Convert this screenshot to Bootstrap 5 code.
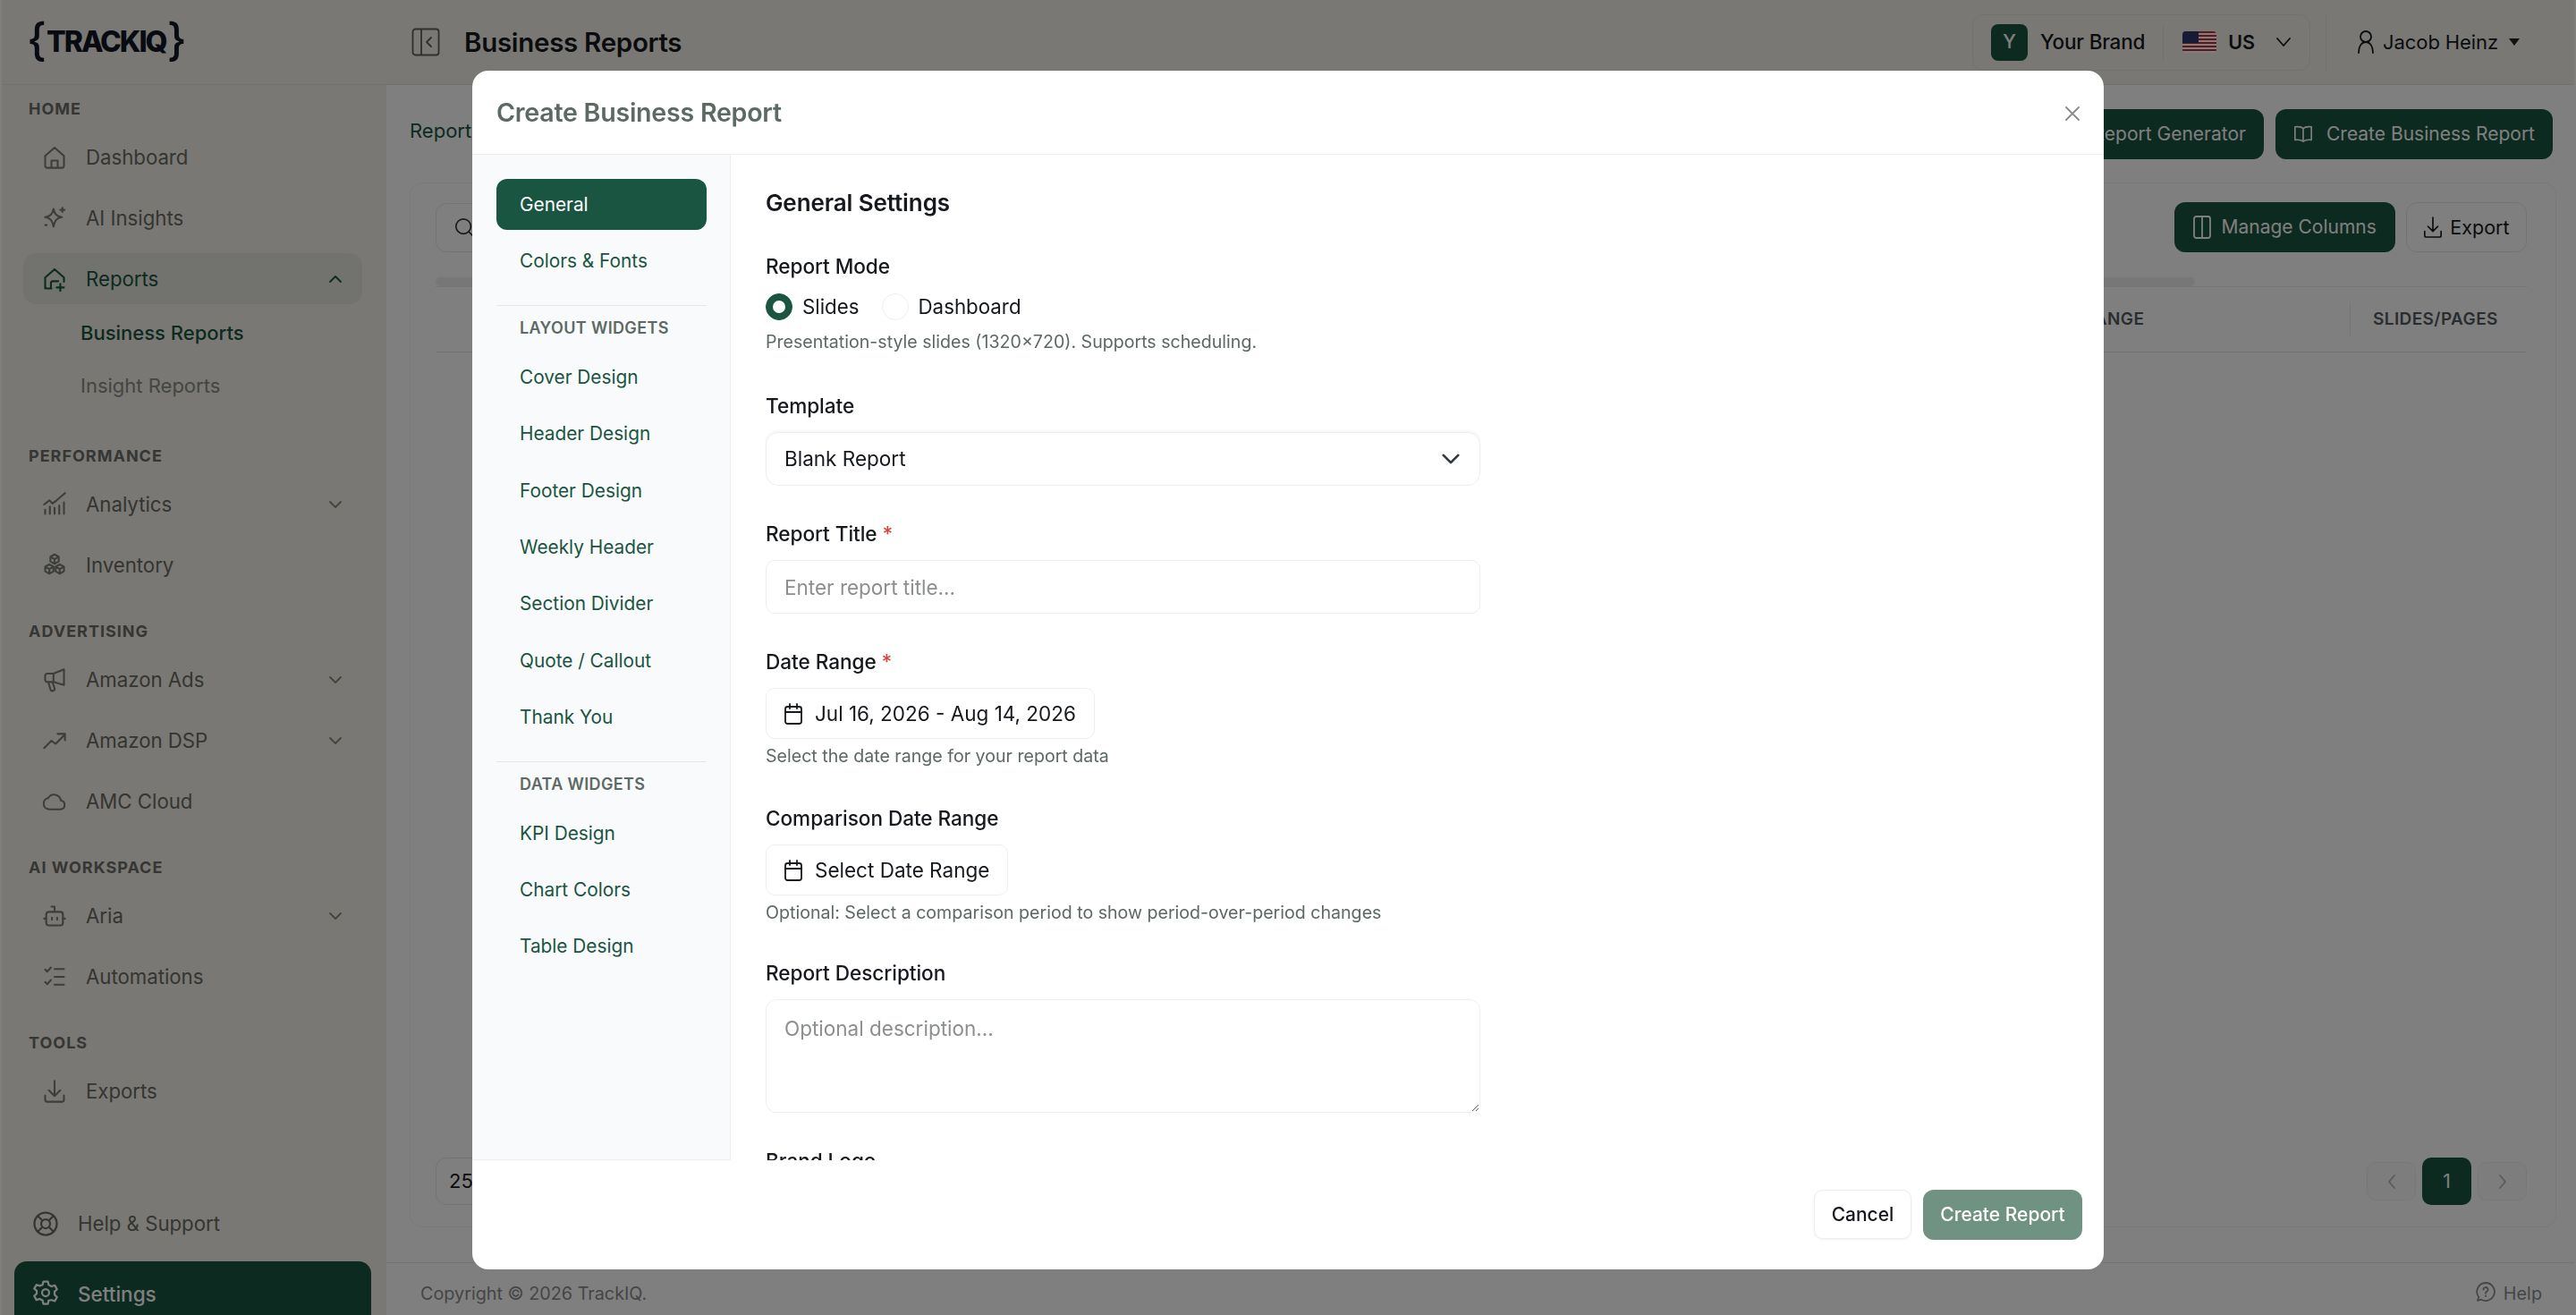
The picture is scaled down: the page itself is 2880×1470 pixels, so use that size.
<!doctype html>
<html lang="en">
<head>
<meta charset="utf-8">
<title>Business Reports</title>
<link href="https://cdn.jsdelivr.net/npm/bootstrap@5.3.0/dist/css/bootstrap.min.css" rel="stylesheet">
<style>
:root{--g:#1a5541;--ink:#15181c;--line:#e8e8e8;--cream:#f3f1e8}
html,body{height:100%}
body{font-family:Inter,"Liberation Sans",sans-serif;font-size:22px;color:var(--ink);background:#fff;overflow:hidden;padding:0 2px}
svg.ic{fill:none;stroke:currentColor;stroke-width:1.8;stroke-linecap:round;stroke-linejoin:round;flex:none}
.shell{height:1470px}
.topbar{height:95px;background:var(--cream);border-bottom:1px solid #e4e2d9;flex:none}
.logo-box{width:430px;padding-left:28px;font-weight:700;color:#111722;line-height:1;flex:none}
.logo-brace{font-size:50px;font-weight:500;position:relative;top:-3px}
.logo-word{font-size:32px;letter-spacing:-2px;padding:0 1px 0 0;font-weight:800}
.panel-tg{color:#5e5e58;margin-left:28px}
.page-name{font-size:29.500px;font-weight:600;margin-left:27px;letter-spacing:-.3px}
.brand-box{height:63px;border:1px solid #e4e2d9;border-radius:12px;padding:0 20px;width:378px}
.brand-y{width:41px;height:41px;border-radius:8px;background:var(--g);color:#fff;font-size:21px;font-weight:500}
.brand-name{font-weight:500;font-size:22.500px;margin-left:14px;letter-spacing:-.2px}
.brand-sep{width:1px;height:40px;background:#e4e2d9;margin:0 21px 0 20px}
.us-txt{font-weight:600;font-size:21.500px;margin-left:13px}
.top-sep{width:1px;height:63px;background:#e4e2d9;margin:0 34px 0 17px}
.user-name{font-size:22px;margin-left:9px;margin-right:12px;letter-spacing:-.1px}
.caret-dn{width:0;height:0;border-left:6px solid transparent;border-right:6px solid transparent;border-top:8px solid #222;margin-right:61px}
.side{width:430px;background:var(--cream);flex:none;height:1375px;overflow:hidden;padding-top:16px}
.sec-lab{font-size:18px;font-weight:700;letter-spacing:1px;line-height:22px;color:#6d6d68;padding-left:30px;margin-bottom:14px}
.sec-lab.next{margin-top:24px}
.nv-item{height:57px;margin:0 27px 11px 24px;padding:0 21px;border-radius:14px;display:flex;align-items:center;color:#6a6a64;font-size:22.200px;gap:21px;text-decoration:none}
.nv-item svg.ic:first-child{color:#7a7a74}
.nv-item .chev{margin-left:auto;margin-right:1px;color:#8f8676}
.nv-item.act{background:#e5e7df;color:var(--g);margin-bottom:3px}
.nv-item.act svg.ic{color:var(--g)!important}
.sub-wrap{margin-bottom:14px}
.sub-item{height:59px;display:flex;align-items:center;padding-left:88px;font-size:22px;color:#8a8a84;text-decoration:none}
.sub-item.on{color:var(--g);font-weight:500}
.side-foot{margin-top:auto;margin-bottom:-10px}
.foot-item{height:57px;display:flex;align-items:center;gap:21px;padding-left:34px;color:#6a6a64;font-size:22.200px;margin-bottom:14px;text-decoration:none}
.foot-item.set{height:70px;background:var(--g);color:#fff;margin:0 17px 0 14px;border-radius:14px 14px 0 0;padding-left:20px;font-weight:500;align-items:flex-start;padding-top:20px;font-size:22.500px}
.main-col{min-width:0;height:1375px}
.page-top{padding:27px 24px 0 26px;height:109px;flex:none}
.crumb{color:var(--g);font-size:22px}
.g-btn{background:var(--g);color:#fff;border:0;border-radius:12px;height:56px;font-size:21px;padding:0 20px;display:flex;align-items:center;gap:15px;--bs-btn-hover-bg:var(--g)}
.page-card{margin:0 20px 0 26px;border:1px solid #f2f2f2;border-radius:14px;height:1168px;padding:21px 32px 0 28px;flex:none}
.tool-row{height:56px}
.search-bx{width:520px;height:55px;border:1px solid var(--line);border-radius:12px;padding:0 20px;color:#333;gap:14px;font-size:21px}
.ln-btn{background:#fff;border:1px solid var(--line);border-radius:12px;height:56px;font-size:21.500px;padding:0 18.500px;display:flex;align-items:center;gap:8px;color:var(--ink)}
.scroll-bar{height:10px;width:1967px;background:#eee;border-radius:6px;margin-top:28px}
.t-wrap{border-top:1px solid var(--line)}
.rep-table{table-layout:fixed;width:100%;margin:0}
.rep-table th{height:72px;font-size:19px;font-weight:600;letter-spacing:.4px;color:#555b5f;vertical-align:middle;padding:0 26px;border-bottom:1px solid var(--line);position:relative;white-space:nowrap}
.rep-table th+th::before{content:"";position:absolute;left:0;top:18px;bottom:18px;width:1px;background:var(--line)}
.pg-row{margin-top:auto;height:76px;padding-bottom:24px}
.per-box{width:110px;height:53px;border:1px solid var(--line);border-radius:12px;padding-left:14px}
.pg-nav{width:55px;height:43px;border:1px solid #efefef;border-radius:10px;color:#b5b5b5;background:#fbfbfb}
.pg-on{width:55px;height:53px;border-radius:10px;background:var(--g);color:#fff;font-size:21px;margin:0 7px}
.page-foot{height:59px;border-top:1px solid #e6e6e6;margin-top:39px;padding:20px 36px 0 38px;font-size:19.800px;color:#8b8b8b;flex:none}
/* modal */
.modal.rp-modal{display:block}
.rp-dialog{max-width:none;width:1824px;margin:79px auto 0}
.rp-content{height:1340px;border:0;border-radius:18px;overflow:hidden}
.rp-head{height:94px;padding:2px 28px 0 27px;border-bottom:1px solid #eceef0;flex:none}
.rp-title{font-size:28.600px;font-weight:600;color:#5d6a63;letter-spacing:-.25px;margin:0}
.rp-close{width:18px;height:18px;color:#8a8a8a;background:none;border:0;padding:0;margin-right:-2px;display:flex}
.rp-mid{height:1124px;flex:none;min-height:0}
.rp-tabs{width:289px;background:#f8fafc;border-right:1px solid #eceef0;border-bottom:1px solid #eceef0;padding:27px 26px 0 27px;flex:none}
.rp-tab{height:57px;border-radius:12px;display:flex;align-items:center;padding-left:26px;color:var(--g);font-size:20.800px;margin-bottom:6.400px;text-decoration:none}
.rp-tab.on{background:var(--g);color:#fff}
.rp-sep{height:1px;background:#e5e7ea;margin:20.500px 0 0}
.rp-cap{font-size:18px;font-weight:600;letter-spacing:.35px;color:#5d6a63;padding-left:26px;height:24px;line-height:24px;margin:13px 0 14px}
.rp-form{padding:39px 0 0 39px;overflow:hidden;min-width:0}
.rp-h{font-size:26px;font-weight:600;line-height:30px;margin-bottom:41px;letter-spacing:-.1px}
.rp-lab{font-size:22.600px;font-weight:500;line-height:30px;margin-bottom:14px;display:block;letter-spacing:-.05px}
.req{color:#d8453e}
.rp-radios{height:32px;margin-top:5px;margin-bottom:1px}
.rp-radio{width:30px;height:30px;margin:0;border:1px solid #eceef0;flex:none}
.rp-radio:checked{background-color:var(--g);border-color:var(--g)}
.rp-rl{font-size:22.300px;margin:0 25px 0 11px}
.rp-help{font-size:19.600px;line-height:24px;color:#5d6a63;margin-top:11px}
.rp-help.tight{margin-top:7px}
.rp-sel,.rp-inp,.rp-area{font-size:22.500px;border:1px solid #eceef0;border-radius:14px;padding:0 20px;color:var(--ink);width:799px}
.rp-sel{height:60px;background-size:22px 22px;background-position:right 21px center;box-shadow:0 -2px 3px rgba(0,0,0,.04)}
.rp-inp{height:60px;border-radius:10px}
.rp-inp::placeholder,.rp-area::placeholder{color:#8b8f8d}
.rp-area{height:127px;padding-top:15px;border-radius:12px;resize:vertical}
.rp-date{height:57px;border:1px solid #eceef0;border-radius:10px;padding:0 20px;font-size:22.500px;gap:14px;background:#fff;color:var(--ink);display:inline-flex;align-items:center;width:max-content}
.rp-block{margin-bottom:39px}
.rp-block.has-help{margin-bottom:45px}
.rp-block.gap-date{margin-bottom:43px}
.rp-block.gap-comp{margin-bottom:41px}
.modal-footer.rp-foot{flex:1;padding:33px 24px 0 0;gap:13px;border:0;align-items:flex-start;justify-content:flex-end}
.modal-footer.rp-foot>*{margin:0}
.btn-cancel{height:55px;width:109px;border:1px solid #eceef0;border-radius:10px;background:#fff;font-size:21px;font-weight:500;color:var(--ink);box-shadow:0 1px 3px rgba(0,0,0,.06);padding:0}
.btn-create{height:56px;width:178px;border:0;border-radius:12px;background:#6f9282;color:#fff;font-size:21px;font-weight:500;padding:0}
.btn-create:disabled{background:#6f9282;color:#fff;opacity:1}
</style>
</head>
<body>
<div class="shell d-flex flex-column">
  <header class="topbar d-flex align-items-center">
    <div class="logo-box d-flex align-items-center"><span class="logo-brace">{</span><span class="logo-word">TRACKIQ</span><span class="logo-brace">}</span></div>
    <svg class="ic panel-tg" width="32" height="32" viewBox="0 0 32 32" stroke-width="2"><rect x="1.500" y="1.500" width="29" height="29" rx="3"/><path d="M11 2v28M22 11l-5 5 5 5"/></svg>
    <div class="page-name">Business Reports</div>
    <div class="ms-auto d-flex align-items-center">
      <div class="brand-box d-flex align-items-center">
        <span class="brand-y d-flex align-items-center justify-content-center">Y</span>
        <span class="brand-name">Your Brand</span>
        <span class="brand-sep"></span>
        <svg width="38" height="24" viewBox="0 0 38 24"><defs><clipPath id="fl"><rect width="38" height="24" rx="4"/></clipPath></defs><g clip-path="url(#fl)"><rect width="38" height="24" fill="#fff"/><path d="M0 1h38M0 5h38M0 9h38M0 13h38M0 17h38M0 21h38" stroke="#bf2f3c" stroke-width="2"/><rect width="18" height="13" fill="#33376d"/></g></svg>
        <span class="us-txt">US</span>
        <svg class="ic ms-auto" width="18" height="18" viewBox="0 0 18 18" stroke="#555"><path d="M2 5l7 8 7-8"/></svg>
      </div>
      <span class="top-sep"></span>
      <svg class="ic" width="20" height="28" viewBox="0 0 20 28"><circle cx="10" cy="8" r="6"/><path d="M2 26c0-7 3-12 8-12s8 5 8 12"/></svg>
      <span class="user-name">Jacob Heinz</span>
      <span class="caret-dn"></span>
    </div>
  </header>
  <div class="d-flex flex-grow-1">
    <aside class="side d-flex flex-column">
      <div class="sec-lab">HOME</div>
      <a class="nv-item"><svg class="ic" width="28" height="28" viewBox="0 0 24 24"><path d="M3 10.500 12 2.500l9 8V20a2 2 0 0 1-2 2H5a2 2 0 0 1-2-2zM9 22v-7h6v7"/></svg>Dashboard</a>
      <a class="nv-item"><svg class="ic" width="28" height="28" viewBox="0 0 24 24"><path d="M11 3c1 5 3 7 8 8-5 1-7 3-8 9-1-6-3-8-8-9 5-1 7-3 8-8zM19.500 2v4M17.500 4h4M3 18.500h1.500"/></svg>AI Insights</a>
      <a class="nv-item act"><svg class="ic" width="28" height="28" viewBox="0 0 24 24"><path d="M3 21V10.500L12 2.500l9 8v4M9 21H5a2 2 0 0 1-2-2M8.500 21v-5a2 2 0 0 1 2-2h5M14 20h7M17.500 16.500v7"/></svg>Reports<svg class="ic chev" width="16" height="16" viewBox="0 0 16 16" stroke-width="2"><path d="M2 11l6-6 6 6"/></svg></a>
      <div class="sub-wrap">
        <a class="sub-item on">Business Reports</a>
        <a class="sub-item">Insight Reports</a>
      </div>
      <div class="sec-lab next">PERFORMANCE</div>
      <a class="nv-item"><svg class="ic" width="28" height="28" viewBox="0 0 24 24"><path d="M2 12l5-4 3 3 4-3 8-7M3 21v-4M7.500 21v-7M12 21v-6M16.500 21v-8M21 21V10"/></svg>Analytics<svg class="ic chev" width="16" height="16" viewBox="0 0 16 16"><path d="M2 5l6 6 6-6"/></svg></a>
      <a class="nv-item"><svg class="ic" width="28" height="28" viewBox="0 0 24 24"><path d="M12 1.500l4 2.300v4.400l-4 2.300-4-2.300V3.800zM8 3.800l4 2.300 4-2.300M12 6.100v4.400M7 11l4 2.300v4.400l-4 2.300-4-2.300v-4.400zM3 13.300l4 2.300 4-2.300M7 15.600V20M17 11l4 2.300v4.400L17 20l-4-2.300v-4.400zM13 13.300l4 2.300 4-2.300M17 15.600V20"/></svg>Inventory</a>
      <div class="sec-lab next">ADVERTISING</div>
      <a class="nv-item"><svg class="ic" width="28" height="28" viewBox="0 0 24 24"><path d="M21 2v15l-10-3H5a2 2 0 0 1-2-2V8a2 2 0 0 1 2-2h6zM11 6v8M6 14l2 7a2 2 0 0 0 4-1l-2-6"/></svg>Amazon Ads<svg class="ic chev" width="16" height="16" viewBox="0 0 16 16"><path d="M2 5l6 6 6-6"/></svg></a>
      <a class="nv-item"><svg class="ic" width="28" height="28" viewBox="0 0 24 24"><path d="M2 19l7-7 4 3 9-9M15 5.500h7v6"/></svg>Amazon DSP<svg class="ic chev" width="16" height="16" viewBox="0 0 16 16"><path d="M2 5l6 6 6-6"/></svg></a>
      <a class="nv-item"><svg class="ic" width="28" height="28" viewBox="0 0 24 24"><path d="M7 19.500a5.500 5.500 0 0 1-1-10.900 6.500 6.500 0 0 1 12 2.400 4.300 4.300 0 0 1 0 8.500z"/></svg>AMC Cloud</a>
      <div class="sec-lab next">AI WORKSPACE</div>
      <a class="nv-item"><svg class="ic" width="28" height="28" viewBox="0 0 24 24"><rect x="4" y="8" width="16" height="13" rx="2.500"/><path d="M12 8V3H9M2 14.500h2M20 14.500h2M9.500 13.500v2M14.500 13.500v2"/></svg>Aria<svg class="ic chev" width="16" height="16" viewBox="0 0 16 16"><path d="M2 5l6 6 6-6"/></svg></a>
      <a class="nv-item"><svg class="ic" width="28" height="28" viewBox="0 0 24 24"><path d="M3 5l2 2 3.500-4M3 17l2 2 3.500-4M12 4.500h9M12 12h9M12 19.500h9"/></svg>Automations</a>
      <div class="sec-lab next">TOOLS</div>
      <a class="nv-item"><svg class="ic" width="28" height="28" viewBox="0 0 24 24"><path d="M12 2v14M6.500 11l5.500 5.500 5.500-5.500M3 16v4a2 2 0 0 0 2 2h14a2 2 0 0 0 2-2v-4"/></svg>Exports</a>
      <div class="side-foot">
        <a class="foot-item"><svg class="ic" width="30" height="30" viewBox="0 0 24 24"><circle cx="12" cy="12" r="10"/><circle cx="12" cy="12" r="4"/><path d="M5 5l4 4M19 5l-4 4M5 19l4-4M19 19l-4-4"/></svg>Help &amp; Support</a>
        <a class="foot-item set"><svg class="ic" width="30" height="30" viewBox="0 0 24 24"><circle cx="12" cy="12" r="3.200"/><path d="M10 2h4l.7 3 2.500 1.400 3-.9 2 3.500-2.200 2.100v2.800l2.200 2.100-2 3.500-3-.9L14.700 19l-.7 3h-4l-.7-3-2.500-1.400-3 .9-2-3.500 2.200-2.100v-2.800L1.800 8.500l2-3.500 3 .9L9.300 5z"/></svg>Settings</a>
      </div>
    </aside>
    <main class="main-col flex-grow-1 d-flex flex-column">
      <div class="page-top d-flex align-items-start">
        <div class="crumb mt-2">Reports</div>
        <div class="ms-auto d-flex" style="gap:13px">
          <button class="btn g-btn" type="button"><svg class="ic" width="22" height="22" viewBox="0 0 24 24"><path d="M5 3h14v18H5zM9 8h6M9 13h6"/></svg>Report Generator</button>
          <button class="btn g-btn" type="button"><svg class="ic" width="22" height="26" viewBox="0 0 24 24" stroke-width="1.500"><path d="M12 5C10 3 6 2.500 2 3v16c4-.5 8 0 10 2 2-2 6-2.500 10-2V3c-4-.5-8 0-10 2zM12 5v16"/></svg>Create Business Report</button>
        </div>
      </div>
      <div class="page-card d-flex flex-column">
        <div class="tool-row d-flex align-items-center">
          <div class="search-bx d-flex align-items-center"><svg class="ic" width="22" height="22" viewBox="0 0 24 24" stroke-width="2"><circle cx="11" cy="11" r="9"/><path d="M18 18l4.500 4.500"/></svg></div>
          <div class="ms-auto d-flex" style="gap:12px">
            <button class="btn g-btn" type="button" style="gap:12px;padding:0 21px"><svg class="ic" width="20" height="26" viewBox="0 0 20 26" stroke-width="1.500"><rect x="1" y="1" width="18" height="24" rx="2.500"/><path d="M10 1v24"/></svg>Manage Columns</button>
            <button class="btn ln-btn" type="button"><svg class="ic" width="22" height="24" viewBox="0 0 24 26"><path d="M12 1v16M6 12l6 6 6-6M2 18v5a2 2 0 0 0 2 2h16a2 2 0 0 0 2-2v-5"/></svg>Export</button>
          </div>
        </div>
        <div class="scroll-bar"></div>
        <div class="t-wrap">
          <table class="table rep-table">
            <thead><tr><th></th><th style="width:380px"></th><th style="width:380px"></th><th style="width:380px">DATE RANGE</th><th style="width:198px">SLIDES/PAGES</th></tr></thead>
          </table>
        </div>
        <div class="pg-row d-flex align-items-end">
          <div class="per-box d-flex align-items-center">25</div>
          <div class="ms-auto d-flex align-items-center">
            <span class="pg-nav d-flex align-items-center justify-content-center"><svg class="ic" width="12" height="20" viewBox="0 0 12 20"><path d="M9 3l-6 7 6 7"/></svg></span>
            <span class="pg-on d-flex align-items-center justify-content-center">1</span>
            <span class="pg-nav d-flex align-items-center justify-content-center"><svg class="ic" width="12" height="20" viewBox="0 0 12 20"><path d="M3 3l6 7-6 7"/></svg></span>
          </div>
        </div>
      </div>
      <footer class="page-foot d-flex">
        <span>Copyright © 2026 TrackIQ.</span>
        <span class="ms-auto d-flex align-items-start gap-2"><svg class="ic" width="24" height="24" viewBox="0 0 24 24"><path d="M12 2a10 10 0 1 1-5 18.700L3 22l1.300-4A10 10 0 0 1 12 2zM9.500 9.500a2.500 2.500 0 1 1 3.700 2.200c-.8.5-1.200 1-1.200 2M12 16.500v.5"/></svg>Help</span>
      </footer>
    </main>
  </div>
</div>

<div class="modal-backdrop show"></div>
<div class="modal rp-modal" tabindex="-1" role="dialog">
  <div class="modal-dialog rp-dialog">
    <div class="modal-content rp-content">
      <div class="modal-header rp-head">
        <h5 class="modal-title rp-title">Create Business Report</h5>
        <button type="button" class="rp-close ms-auto" aria-label="Close"><svg class="ic" width="18" height="18" viewBox="0 0 18 18" stroke-width="1.500"><path d="M2 2l14 14M16 2 2 16"/></svg></button>
      </div>
      <div class="d-flex rp-mid">
        <nav class="rp-tabs">
          <a class="rp-tab on">General</a>
          <a class="rp-tab">Colors &amp; Fonts</a>
          <div class="rp-sep"></div>
          <div class="rp-cap">LAYOUT WIDGETS</div>
          <a class="rp-tab">Cover Design</a>
          <a class="rp-tab">Header Design</a>
          <a class="rp-tab">Footer Design</a>
          <a class="rp-tab">Weekly Header</a>
          <a class="rp-tab">Section Divider</a>
          <a class="rp-tab">Quote / Callout</a>
          <a class="rp-tab">Thank You</a>
          <div class="rp-sep"></div>
          <div class="rp-cap">DATA WIDGETS</div>
          <a class="rp-tab">KPI Design</a>
          <a class="rp-tab">Chart Colors</a>
          <a class="rp-tab">Table Design</a>
        </nav>
        <div class="rp-form flex-grow-1">
          <div class="rp-h">General Settings</div>
          <div class="rp-block has-help">
            <label class="rp-lab">Report Mode</label>
            <div class="d-flex align-items-center rp-radios">
              <input class="form-check-input rp-radio" type="radio" name="m" checked>
              <span class="rp-rl">Slides</span>
              <input class="form-check-input rp-radio" type="radio" name="m">
              <span class="rp-rl">Dashboard</span>
            </div>
            <div class="rp-help">Presentation-style slides (1320×720). Supports scheduling.</div>
          </div>
          <div class="rp-block">
            <label class="rp-lab">Template</label>
            <select class="form-select rp-sel"><option>Blank Report</option></select>
          </div>
          <div class="rp-block">
            <label class="rp-lab">Report Title <span class="req">*</span></label>
            <input class="form-control rp-inp" type="text" placeholder="Enter report title...">
          </div>
          <div class="rp-block gap-date">
            <label class="rp-lab">Date Range <span class="req">*</span></label>
            <div class="rp-date"><svg class="ic" width="20" height="24" viewBox="0 0 20 24"><rect x="1" y="4" width="18" height="19" rx="2.500"/><path d="M1 10h18M6 1v5M14 1v5"/></svg>Jul 16, 2026 - Aug 14, 2026</div>
            <div class="rp-help tight">Select the date range for your report data</div>
          </div>
          <div class="rp-block gap-comp">
            <label class="rp-lab">Comparison Date Range</label>
            <div class="rp-date"><svg class="ic" width="20" height="24" viewBox="0 0 20 24"><rect x="1" y="4" width="18" height="19" rx="2.500"/><path d="M1 10h18M6 1v5M14 1v5"/></svg>Select Date Range</div>
            <div class="rp-help tight">Optional: Select a comparison period to show period-over-period changes</div>
          </div>
          <div class="rp-block">
            <label class="rp-lab">Report Description</label>
            <textarea class="form-control rp-area" placeholder="Optional description..."></textarea>
          </div>
          <label class="rp-lab">Brand Logo</label>
        </div>
      </div>
      <div class="modal-footer rp-foot d-flex">
        <button type="button" class="btn btn-cancel">Cancel</button>
        <button type="button" class="btn btn-create" disabled>Create Report</button>
      </div>
    </div>
  </div>
</div>
<script src="https://cdn.jsdelivr.net/npm/bootstrap@5.3.0/dist/js/bootstrap.bundle.min.js"></script>
</body>
</html>
